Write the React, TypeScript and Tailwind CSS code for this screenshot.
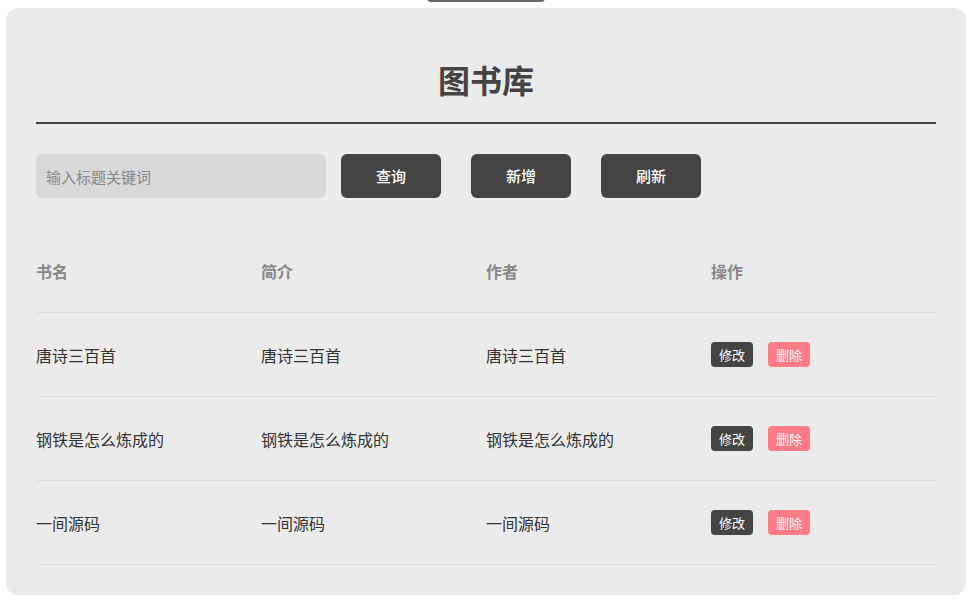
import React from "react";

const books = [
  { title: "唐诗三百首", intro: "唐诗三百首", author: "唐诗三百首" },
  { title: "钢铁是怎么炼成的", intro: "钢铁是怎么炼成的", author: "钢铁是怎么炼成的" },
  { title: "一间源码", intro: "一间源码", author: "一间源码" },
];

export default function App() {
  return (
    <div
      className="min-h-[600px] bg-white pt-[8px]"
      style={{ fontFamily: '"Noto Sans CJK SC", "Noto Sans", sans-serif' }}
    >
      <div className="relative ml-[6px] w-[960px] rounded-xl bg-[#ebebeb] px-[30px] pt-[49px] pb-[30px]">
        {/* top handle */}
        <div className="absolute left-[421px] top-[-14px] h-[8px] w-[118px] rounded-md bg-[#666]" />

        <h1 className="h-[44px] text-center text-[32px] font-bold leading-[44px] text-[#444]">图书库</h1>
        <div className="mt-[21px] h-[2px] bg-[#444]" />

        <div className="mt-[30px] flex items-center">
          <input
            type="text"
            placeholder="输入标题关键词"
            className="h-[44px] w-[290px] rounded-md bg-[#d9d9d9] px-[10px] text-[15px] text-[#333] placeholder-[#888] outline-none"
          />
          <button className="ml-[15px] h-[44px] w-[100px] rounded-md bg-[#444] text-[15px] font-medium text-white">查询</button>
          <button className="ml-[30px] h-[44px] w-[100px] rounded-md bg-[#444] text-[15px] font-medium text-white">新增</button>
          <button className="ml-[30px] h-[44px] w-[100px] rounded-md bg-[#444] text-[15px] font-medium text-white">刷新</button>
        </div>

        <div className="mt-[31px]">
          <div className="grid h-[84px] grid-cols-4 items-center border-b border-[#dedede] text-[16px] font-bold text-[#888]">
            <div>书名</div>
            <div>简介</div>
            <div>作者</div>
            <div>操作</div>
          </div>
          {books.map((b, i) => (
            <div
              key={i}
              className="grid h-[84px] grid-cols-4 items-center border-b border-[#dedede] text-[16px] text-[#333]"
            >
              <div>{b.title}</div>
              <div>{b.intro}</div>
              <div>{b.author}</div>
              <div className="flex items-center gap-[15px]">
                <button className="h-[25px] w-[42px] rounded-[4px] bg-[#444] text-[13px] text-white">修改</button>
                <button className="h-[25px] w-[42px] rounded-[4px] bg-[#ff7b85] text-[13px] text-white">删除</button>
              </div>
            </div>
          ))}
        </div>
      </div>
    </div>
  );
}
